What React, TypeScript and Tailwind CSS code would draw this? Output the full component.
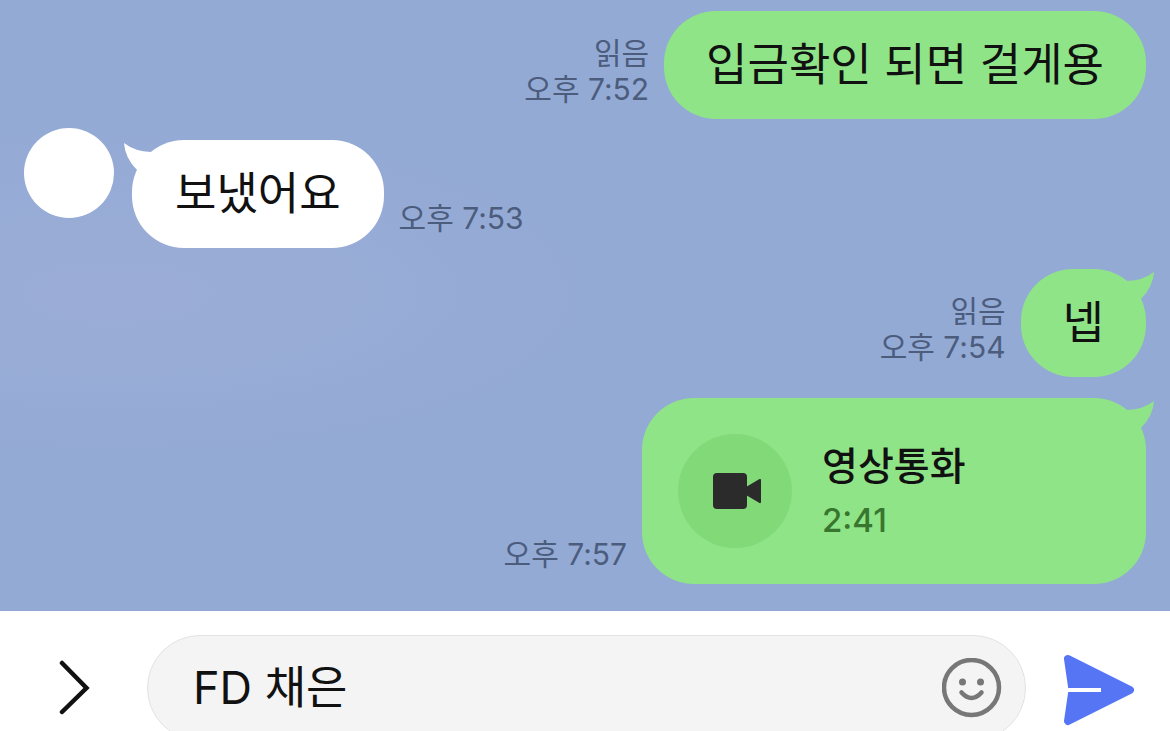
import React, { useState } from 'react';

type BubbleProps = {
    side: 'sent' | 'received';
    tail?: boolean;
    className?: string;
    children: React.ReactNode;
};

const Bubble: React.FC<BubbleProps> = ({ side, tail = false, className = '', children }) => {
    const sent = side === 'sent';

    return (
        <div className={`relative rounded-[52px] ${sent ? 'bg-[#8fe488]' : 'bg-white'} ${className}`}>
            {tail && (
                <svg
                    viewBox="0 0 40 30"
                    className={`absolute top-[3px] h-[30px] w-10 ${sent ? '-right-2 -scale-x-100 text-[#8fe488]' : '-left-2 text-white'}`}
                    fill="currentColor"
                    aria-hidden="true"
                >
                    <path d="M0 0 Q11 8.500 27 9 L40 18 L13 27 Q1 15 0 0 Z" />
                </svg>
            )}
            {children}
        </div>
    );
};

const Meta: React.FC<{ time: string; read?: boolean }> = ({ time, read = false }) => (
    <div className="pb-3 text-right text-[30px] leading-9 text-[#4c5c7d]">
        {read && <p>읽음</p>}
        <p>{time}</p>
    </div>
);

const SentMessage: React.FC<{ text: string; time: string; tail?: boolean }> = ({ text, time, tail }) => (
    <li className="flex items-end justify-end gap-[15px]">
        <Meta time={time} read />
        <Bubble side="sent" tail={tail} className="px-[42px] py-5">
            <p className="text-[45px] leading-[68px]">{text}</p>
        </Bubble>
    </li>
);

const App: React.FC = () => {
    const [message, setMessage] = useState('FD 채은');

    return (
        <div className="flex h-screen flex-col overflow-hidden bg-white font-['Inter','Noto_Sans_CJK_KR',sans-serif] text-[#111]">
            <main className="shrink-0 bg-[#93aad5] bg-[radial-gradient(ellipse_500px_170px_at_10%_48%,#9badd6,#93aad5)] px-6 pt-[11px] pb-[27px]">
                <ul className="flex flex-col gap-[21px]">
                    <SentMessage text="입금확인 되면 걸게용" time="오후 7:52" />

                    <li className="flex items-end">
                        <div className="-mt-3 mr-[18px] size-[90px] self-start rounded-full bg-white" />
                        <Bubble side="received" tail className="mr-[15px] px-[43px] py-5">
                            <p className="text-[45px] leading-[68px]">보냈어요</p>
                        </Bubble>
                        <Meta time="오후 7:53" />
                    </li>

                    <SentMessage text="넵" time="오후 7:54" tail />

                    <li className="flex items-end justify-end gap-[15px]">
                        <Meta time="오후 7:57" />
                        <Bubble side="sent" tail className="flex w-[504px] items-center gap-[30px] p-9">
                            <div className="flex size-[114px] items-center justify-center rounded-full bg-[#81d978] pl-1">
                                <svg viewBox="0 0 48 36" className="h-9 w-12" fill="#2b2b2b" aria-hidden="true">
                                    <rect width="34" height="36" rx="4" />
                                    <path d="M33 14 L46.500 6 Q48 5.500 48 7 V29 Q48 30.500 46.500 30 L33 22 Z" />
                                </svg>
                            </div>
                            <div className="pt-1">
                                <p className="text-[39px] leading-[54px] font-medium">영상통화</p>
                                <p className="text-[33px] leading-[54px] font-medium text-[#38762f]">2:41</p>
                            </div>
                        </Bubble>
                    </li>
                </ul>
            </main>

            <form className="flex shrink-0 items-center pt-6" onSubmit={(e) => e.preventDefault()}>
                <button type="button" aria-label="메뉴 열기" className="flex w-[147px] shrink-0 justify-center">
                    <svg viewBox="0 0 32 56" className="h-14 w-8" fill="none" stroke="#111" strokeWidth="4.500" strokeLinecap="round">
                        <path d="M4 3 L28.500 28 L4 52" strokeLinejoin="miter" />
                    </svg>
                </button>
                <div className="flex h-[106px] min-w-0 flex-1 items-center rounded-full border border-[#e2e2e2] bg-[#f4f4f4] pr-[23px] pl-[45px]">
                    <input
                        type="text"
                        aria-label="메시지 입력"
                        value={message}
                        onChange={(e) => setMessage(e.target.value)}
                        className="min-w-0 flex-1 bg-transparent text-[45px] leading-[68px] outline-none"
                    />
                    <button type="button" aria-label="이모티콘">
                        <svg viewBox="0 0 60 60" className="size-[60px]" fill="none" stroke="#777" strokeWidth="4.500">
                            <circle cx="29.500" cy="29.500" r="27.500" />
                            <circle cx="20.500" cy="24" r="3.500" fill="#777" stroke="none" />
                            <circle cx="38.500" cy="24" r="3.500" fill="#777" stroke="none" />
                            <path d="M19.500 34.500 Q29.500 45.500 39.500 34.500" strokeLinecap="round" />
                        </svg>
                    </button>
                </div>
                <button type="submit" aria-label="보내기" className="flex w-36 shrink-0 justify-center pt-1 pl-[2px]">
                    <svg viewBox="0 0 72 72" className="size-[72px]" aria-hidden="true">
                        <path
                            d="M5 5 L67 36 L5 67 L9.500 36 Z"
                            fill="#5675f5"
                            stroke="#5675f5"
                            strokeWidth="8"
                            strokeLinejoin="round"
                        />
                        <path d="M4 36 H38" stroke="#fff" strokeWidth="4" />
                    </svg>
                </button>
            </form>
        </div>
    );
};

export default App;
